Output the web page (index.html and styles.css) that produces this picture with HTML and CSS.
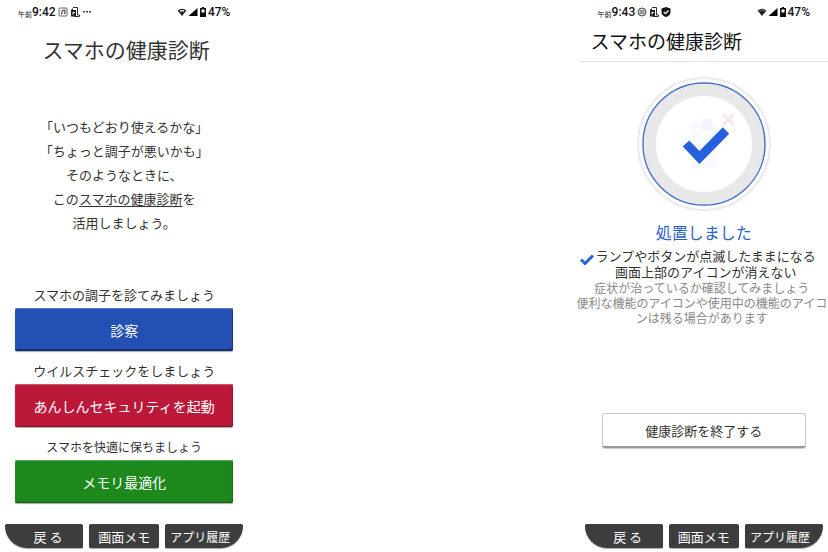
FILE: index.html
```
<!DOCTYPE html>
<html lang="ja">
<head>
    <meta charset="UTF-8">
    <meta name="viewport" content="width=device-width, initial-scale=1.0">
    <title>スマホの健康診断</title>
    <link rel="stylesheet" href="styles.css">
</head>
<body>
    <main class="screens">
        <section class="phone">
            <div class="status">
                <span class="ampm">午前</span><span class="time">9:42</span>
                <svg class="icon" viewBox="0 0 10 10" width="10" height="10">
                    <rect x="1" y="1" width="8" height="8" rx="1" fill="none" stroke="#666"/>
                    <path d="M4 7V3.500L7 3v3.500M3 7h1M6 6.500h1" fill="none" stroke="#333"/>
                </svg>
                <svg class="icon" viewBox="0 0 10 10" width="10" height="10">
                    <path d="M3 .500h4.500v7.500h2v1.500H4" fill="none" stroke="#333"/>
                    <path d="M1 3L3 1v2h3v6.500H1z" fill="#222"/>
                    <path d="M2.500 5h2.500v1H3.500v1.500h-1z" fill="#fff"/>
                </svg>
                <svg class="icon" viewBox="0 0 10 10" width="10" height="10">
                    <path d="M1 4h2v1.500H1zM4 4h2v1.500H4zM7 4h2v1.500H7z" fill="#444"/>
                </svg>
                <span class="status-right">
                    <svg viewBox="0 0 10 10" width="10" height="10">
                        <path d="M.500 3.500Q5 0 9.500 3.500L5 9z" fill="#222"/>
                        <path d="M2.500 3.600Q5 2.200 7.500 3.600L6.600 4.800Q5 3.800 3.400 4.800z" fill="#fff"/>
                    </svg>
                    <svg viewBox="0 0 10 10" width="10" height="10">
                        <path d="M.500 9L9.500 1v8z" fill="#000"/>
                    </svg>
                    <svg viewBox="0 0 8 10" width="8" height="10">
                        <path d="M3 0h2v1h2v9H1V1h2z" fill="#111"/>
                        <path d="M2.500 2.500h3v3h-3z" fill="#fff"/>
                    </svg>
                    <span class="time">47%</span>
                </span>
            </div>

            <h1 class="title">スマホの健康診断</h1>

            <p class="intro">
                「いつもどおり使えるかな」<br>
                「ちょっと調子が悪いかも」<br>
                そのようなときに、<br>
                この<u>スマホの健康診断</u>を<br>
                活用しましょう。
            </p>

            <div class="actions">
                <div class="action">
                    <p class="action-label" id="label-check">スマホの調子を診てみましょう</p>
                    <button class="btn btn-blue" aria-describedby="label-check">診察</button>
                </div>
                <div class="action">
                    <p class="action-label" id="label-virus">ウイルスチェックをしましょう</p>
                    <button class="btn btn-red" aria-describedby="label-virus">あんしんセキュリティを起動</button>
                </div>
                <div class="action">
                    <p class="action-label small" id="label-memory">スマホを快適に保ちましょう</p>
                    <button class="btn btn-green" aria-describedby="label-memory">メモリ最適化</button>
                </div>
            </div>

            <nav class="softkeys">
                <button class="key key-left">戻 る</button>
                <button class="key">画面メモ</button>
                <button class="key key-right">アプリ履歴</button>
            </nav>
        </section>

        <section class="phone">
            <div class="status">
                <span class="ampm">午前</span><span class="time">9:43</span>
                <svg class="icon" viewBox="0 0 10 10" width="10" height="10">
                    <circle cx="5" cy="5" r="4" fill="none" stroke="#444"/>
                    <path d="M2 4h6M2 6.200h6M4 2.500v5M6 2.500v5" fill="none" stroke="#555" stroke-width=".8"/>
                </svg>
                <svg class="icon" viewBox="0 0 10 10" width="10" height="10">
                    <path d="M3 .500h4.500v7.500h2v1.500H4" fill="none" stroke="#333"/>
                    <path d="M1 3L3 1v2h3v6.500H1z" fill="#222"/>
                    <path d="M2.500 5h2.500v1H3.500v1.500h-1z" fill="#fff"/>
                </svg>
                <svg class="icon" viewBox="0 0 10 10" width="10" height="10">
                    <path d="M5 0l4.500 1.500v3.500Q9.500 8.500 5 10Q.500 8.500 .500 5V1.500z" fill="#111"/>
                    <path d="M2.800 5l1.700 1.700L7.500 3.500" fill="none" stroke="#fff" stroke-width="1.200"/>
                </svg>
                <span class="status-right">
                    <svg viewBox="0 0 10 10" width="10" height="10">
                        <path d="M.500 3.500Q5 0 9.500 3.500L5 9z" fill="#222"/>
                        <path d="M1.800 3.900Q5 2 8.200 3.900" fill="none" stroke="#999" stroke-width=".7"/>
                    </svg>
                    <svg viewBox="0 0 10 10" width="10" height="10">
                        <path d="M.500 9L9.500 1v8z" fill="#000"/>
                    </svg>
                    <svg viewBox="0 0 8 10" width="8" height="10">
                        <path d="M3 0h2v1h2v9H1V1h2z" fill="#111"/>
                        <path d="M2.500 2.500h3v3h-3z" fill="#fff"/>
                    </svg>
                    <span class="time">47%</span>
                </span>
            </div>

            <h1 class="header">スマホの健康診断</h1>

            <div class="result">
                <svg class="ring" viewBox="0 0 136 136" width="136" height="136">
                    <circle cx="68" cy="68" r="66" fill="#fafcff" stroke="#ebebeb" stroke-width="2"/>
                    <circle cx="68" cy="68" r="54" fill="#fff" stroke="#e8e8e8" stroke-width="12"/>
                    <circle cx="68" cy="68" r="61" fill="none" stroke="#4a70c4" stroke-width="1.400"/>
                    <path d="M57 48h22v43H57z" fill="#fafbff" stroke="#f5f2fa"/>
                    <path d="M66 43h10v10H66z" fill="#f2f5fd"/>
                    <path d="M87 38l11 11M98 38L87 49" stroke="#fbe6ea" stroke-width="3"/>
                    <path d="M50 67.500l13.500 14L90 54.500" fill="none" stroke="#2560de" stroke-width="9"/>
                </svg>
                <h2 class="done">処置しました</h2>
            </div>

            <div class="symptom">
                <svg class="mark" viewBox="0 0 14 12" width="14" height="12">
                    <path d="M1 5.500L5 9.500L13 1.500" fill="none" stroke="#2560de" stroke-width="3"/>
                </svg>
                <p class="symptom-text">ランプやボタンが点滅したままになる<br>画面上部のアイコンが消えない</p>
            </div>
            <p class="note">
                症状が治っているか確認してみましょう<br>
                便利な機能のアイコンや使用中の機能のアイコ<br>
                ンは残る場合があります
            </p>

            <button class="btn btn-finish">健康診断を終了する</button>

            <nav class="softkeys">
                <button class="key key-left">戻 る</button>
                <button class="key">画面メモ</button>
                <button class="key key-right">アプリ履歴</button>
            </nav>
        </section>
    </main>
</body>
</html>
```

FILE: styles.css
```
* {
    box-sizing: border-box;
}

body {
    font-family: "Noto Sans CJK JP", sans-serif;
    margin: 0;
    background-color: #fff;
    color: #333;
}

h1, h2, p {
    margin: 0;
    font-weight: normal;
}

button {
    font-family: inherit;
    padding: 0;
    border: none;
    cursor: pointer;
}

.screens {
    display: flex;
    justify-content: space-between;
    min-height: 100vh;
}

.phone {
    display: flex;
    flex-direction: column;
    flex: 0 0 30%;
    min-width: 248px;
    padding-bottom: 4px;
}

/* status bar */
.status {
    display: flex;
    align-items: center;
    height: 24px;
    padding: 0 18px;
    color: #111;
}

.ampm {
    font-size: 7px;
    line-height: 8px;
    padding-top: 4px;
}

.time {
    font-family: Roboto, sans-serif;
    font-size: 12px;
    font-weight: 500;
}

.icon {
    margin-left: 2px;
}

.status-right {
    display: flex;
    align-items: center;
    gap: 1px;
    margin-left: auto;
}

/* top screen */
.title {
    margin-top: 10px;
    padding-left: 4px;
    font-size: 21px;
    line-height: 30px;
    text-align: center;
}

.intro {
    margin-top: 51px;
    font-size: 13px;
    line-height: 24px;
    text-align: center;
}

.intro u {
    text-underline-offset: 2px;
}

.actions {
    display: flex;
    flex-direction: column;
    gap: 10px;
    margin-top: 50px;
    padding: 0 15px;
}

.action {
    display: flex;
    flex-direction: column;
    gap: 3px;
}

.action-label {
    font-size: 13px;
    line-height: 20px;
    text-align: center;
}

.action-label.small {
    font-size: 12px;
}

.btn {
    height: 43px;
    border-radius: 2px;
    font-size: 14px;
    color: #fff;
}

.btn-blue {
    background-color: #2450b4;
    box-shadow: inset 0 1px 1px #5577cc, inset -1px -2px 1px #142c6c, 0 1px 1px #aaa;
}

.btn-red {
    background-color: #bc1839;
    box-shadow: inset 0 1px 1px #d0566c, inset -1px -1px 1px #861029, 0 1px 1px #aaa;
}

.btn-green {
    background-color: #1d891d;
    box-shadow: inset 0 1px 1px #58a858, inset -1px -1px 1px #126012, 0 1px 1px #aaa;
}

/* result screen */
.header {
    height: 38px;
    padding: 2px 11px 0;
    border-bottom: 1px solid #e2e2e2;
    font-size: 19px;
    line-height: 30px;
    color: #111;
}

.result {
    display: flex;
    flex-direction: column;
    align-items: center;
    margin-top: 14px;
}

.done {
    margin-top: 8px;
    font-size: 16px;
    line-height: 24px;
    color: #2b5fc8;
}

.symptom {
    display: flex;
    align-items: flex-start;
    gap: 2px;
    margin-top: 4px;
}

.mark {
    margin-top: 6px;
}

.symptom-text {
    font-size: 13px;
    line-height: 16px;
    text-align: center;
}

/* the longest line is a little wider than the column */
.note {
    margin-left: -4px;
    font-size: 12px;
    line-height: 15px;
    text-align: center;
    white-space: nowrap;
    color: #888;
}

.btn-finish {
    height: 35px;
    margin: 88px 22px 0;
    border: 1px solid #ccc;
    border-bottom: 2px solid #999;
    border-radius: 3px;
    box-shadow: 0 1px 1px #ccc;
    background-color: #fff;
    font-size: 13px;
    color: #333;
}

/* bottom keys */
.softkeys {
    display: grid;
    grid-template-columns: 10fr 9fr 10fr;
    gap: 6px;
    margin-top: auto;
    padding: 0 5px;
}

.key {
    height: 24px;
    border-radius: 2px;
    background-color: #3d3d3d;
    box-shadow: 0 1px 1px #aaa;
    font-size: 13px;
    color: #fff;
    white-space: nowrap;
}

.key-left {
    padding-left: 8px;
    border-bottom-left-radius: 24px;
}

.key-right {
    padding-right: 8px;
    border-bottom-right-radius: 24px;
    font-size: 12px;
}
```
